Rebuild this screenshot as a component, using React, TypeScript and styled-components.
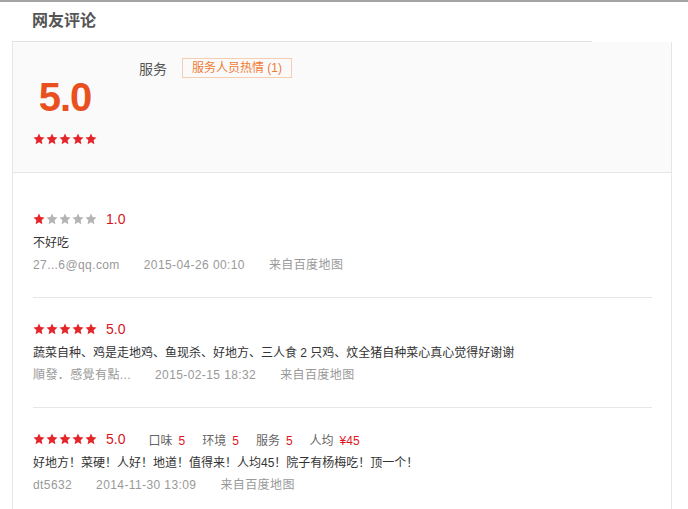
import React from "react";
import styled, {createGlobalStyle} from "styled-components";

const GlobalStyle = createGlobalStyle`
  html, body {
    margin: 0;
    padding: 0;
    background: #fff;
  }
  body {
    font-family: "Liberation Sans", "Noto Sans CJK SC", sans-serif;
    color: #333;
  }
`

const RED = '#e4262b'
const GREY_STAR = '#b4b4b4'

const Page = styled.div`
  border-top: 2px solid #a3a3a3;
`

const Header = styled.h2`
  margin: 0 0 0 12px;
  width: 560px;
  height: 39px;
  line-height: 38px;
  padding-left: 20px;
  font-size: 16px;
  font-weight: bold;
  color: #555;
  border-bottom: 1px solid #e3e3e3;
`

const Panel = styled.div`
  margin-left: 12px;
  width: 658px;
  border-left: 1px solid #e6e6e6;
  border-right: 1px solid #e6e6e6;
`

const Summary = styled.div`
  display: flex;
  height: 114px;
  padding: 16px 0 0 20px;
  background: #fafafa;
  border-bottom: 1px solid #e6e6e6;
`

const ScoreBox = styled.div`
  width: 64px;
  display: flex;
  flex-direction: column;
  align-items: center;
`

const BigScore = styled.div`
  margin-top: 19px;
  font-size: 40px;
  line-height: 40px;
  font-weight: bold;
  color: #e8501f;
  letter-spacing: -1px;
`

const Tags = styled.div`
  margin-left: 42px;
  height: 20px;
  display: flex;
  align-items: center;
  gap: 15px;
`

const TagLabel = styled.span`
  font-size: 14px;
  color: #555;
`

const Tag = styled.span`
  height: 18px;
  line-height: 18px;
  padding: 0 9px;
  font-size: 12px;
  color: #f07a34;
  border: 1px solid #f6cdb0;
`

const StarRow = styled.div<{ $top?: number }>`
  display: flex;
  gap: 1px;
  margin-top: ${(p) => p.$top ?? 0}px;
`

const List = styled.div`
  padding: 15px 19px 0 20px;
`

const Review = styled.div`
  padding: 21px 0 22px;
  border-bottom: 1px solid #e6e6e6;

  &:last-child {
    border-bottom: none;
  }
`

const RatingLine = styled.div`
  display: flex;
  align-items: center;
  height: 20px;
`

const RatingNum = styled.span`
  margin-left: 9px;
  font-size: 14px;
  color: #d9141c;
`

const SubScores = styled.div`
  display: flex;
  margin-left: 23px;
  gap: 17px;
`

const SubScore = styled.span`
  font-size: 12px;
  color: #666;

  & b {
    font-weight: normal;
    color: #e0141e;
    margin-left: 6px;
  }
`

const Text = styled.div`
  margin-top: 4px;
  line-height: 20px;
  font-size: 12px;
  color: #333;
`

const Meta = styled.div`
  display: flex;
  margin-top: 2px;
  line-height: 20px;
  font-size: 12px;
  letter-spacing: 0.4px;
  color: #999;

  & span {
    margin-right: 24px;
  }
`

function Star({on}: { on: boolean }) {
    return (
        <svg width="12" height="12" viewBox="0 0 24 24">
            <polygon fill={on ? RED : GREY_STAR}
                     points="12,1 15.2,8.2 23,9 17.2,14.4 18.8,22.3 12,18.3 5.2,22.3 6.8,14.4 1,9 8.8,8.2"/>
        </svg>
    )
}

function Stars({value, top}: { value: number, top?: number }) {
    return (
        <StarRow $top={top}>
            {[1, 2, 3, 4, 5].map((i) => <Star key={i} on={i <= value}/>)}
        </StarRow>
    )
}

interface ReviewData {
    score: number,
    subs?: { label: string, value: string }[],
    text: string,
    user: string,
    date: string,
    from: string
}

const reviews: ReviewData[] = [
    {
        score: 1,
        text: '不好吃',
        user: '27...6@qq.com',
        date: '2015-04-26 00:10',
        from: '来自百度地图'
    },
    {
        score: 5,
        text: '蔬菜自种、鸡是走地鸡、鱼现杀、好地方、三人食 2 只鸡、炆全猪自种菜心真心觉得好谢谢',
        user: '順發．感覺有點...',
        date: '2015-02-15 18:32',
        from: '来自百度地图'
    },
    {
        score: 5,
        subs: [
            {label: '口味', value: '5'},
            {label: '环境', value: '5'},
            {label: '服务', value: '5'},
            {label: '人均', value: '¥45'}
        ],
        text: '好地方！菜硬！人好！地道！值得来！人均45！院子有杨梅吃！顶一个！',
        user: 'dt5632',
        date: '2014-11-30 13:09',
        from: '来自百度地图'
    }
]

export default function App() {
    return (
        <>
            <GlobalStyle/>
            <Page>
                <Header>网友评论</Header>
                <Panel>
                    <Summary>
                        <ScoreBox>
                            <BigScore>5.0</BigScore>
                            <Stars value={5} top={16}/>
                        </ScoreBox>
                        <Tags>
                            <TagLabel>服务</TagLabel>
                            <Tag>服务人员热情 (1)</Tag>
                        </Tags>
                    </Summary>
                    <List>
                        {reviews.map((r, index) => (
                            <Review key={index}>
                                <RatingLine>
                                    <Stars value={r.score}/>
                                    <RatingNum>{r.score.toFixed(1)}</RatingNum>
                                    {r.subs && (
                                        <SubScores>
                                            {r.subs.map((s) => (
                                                <SubScore key={s.label}>{s.label}<b>{s.value}</b></SubScore>
                                            ))}
                                        </SubScores>
                                    )}
                                </RatingLine>
                                <Text>{r.text}</Text>
                                <Meta>
                                    <span>{r.user}</span>
                                    <span>{r.date}</span>
                                    <span>{r.from}</span>
                                </Meta>
                            </Review>
                        ))}
                    </List>
                </Panel>
            </Page>
        </>
    )
}
